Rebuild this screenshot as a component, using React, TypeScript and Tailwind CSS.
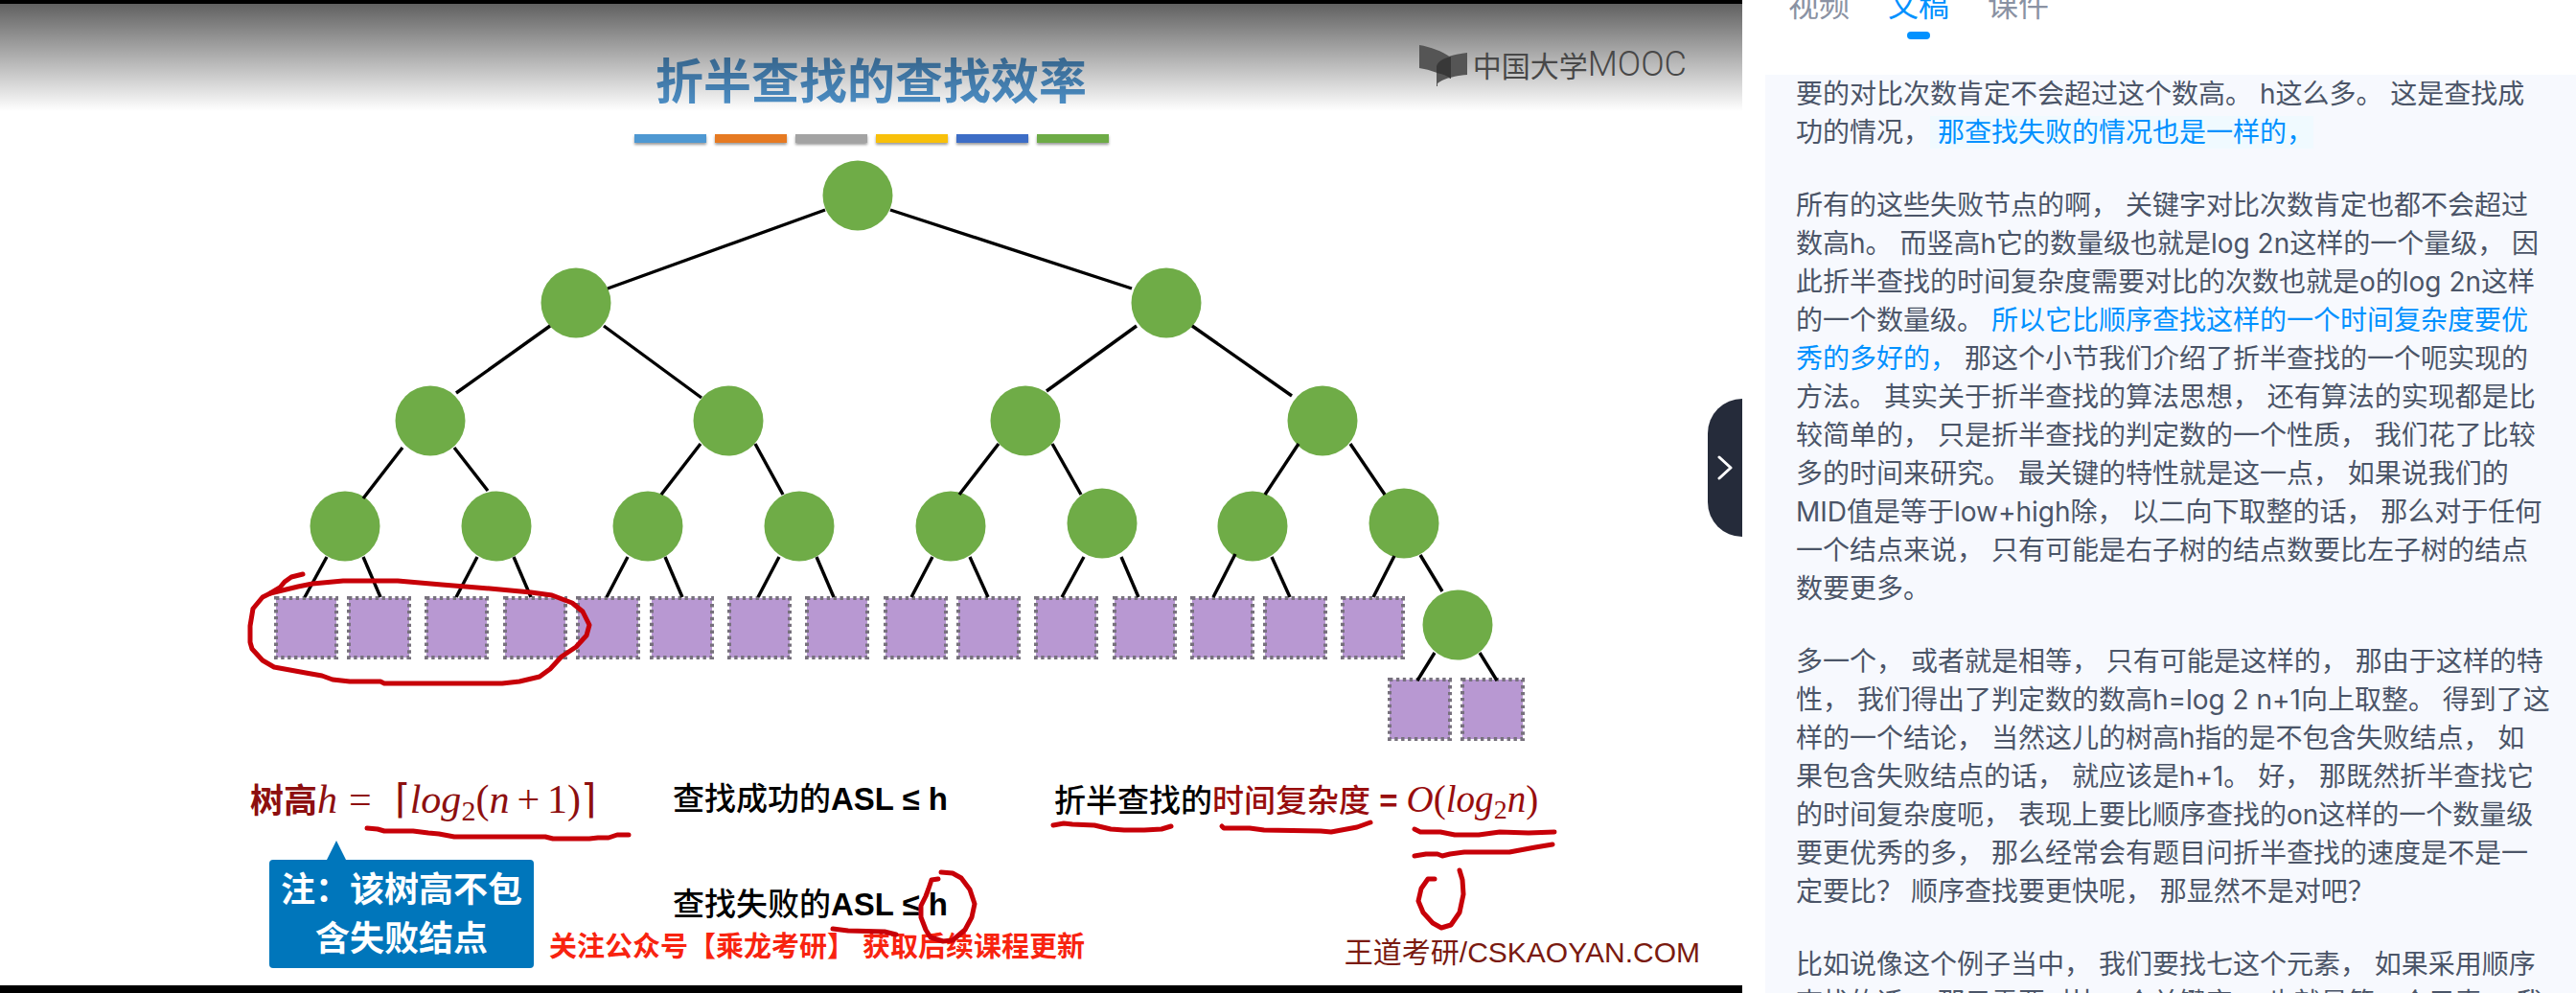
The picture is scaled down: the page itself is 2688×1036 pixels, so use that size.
import React from "react";

type Point = [number, number];
type Edge = [number, number, number, number];

const BARS = ["bg-[#4e98d2]", "bg-[#e67a22]", "bg-[#a3a3a3]", "bg-[#f8c00a]", "bg-[#3d6dc6]", "bg-[#6dab46]"];

const NODES: Point[] = [
  [895, 204],
  [601, 316], [1217, 316],
  [449, 439], [760, 439], [1070, 439], [1380, 439],
  [360, 549], [518, 549], [676, 549], [834, 549], [992, 549], [1150, 546], [1307, 549], [1465, 546],
  [1521, 652],
];

const EDGES: Edge[] = [
  [861, 219, 634, 301], [929, 219, 1181, 301],
  [574, 340, 476, 410], [630, 340, 732, 415],
  [1186, 340, 1092, 408], [1244, 340, 1348, 413],
  [420, 467, 379, 520], [474, 467, 509, 512],
  [731, 463, 690, 516], [788, 463, 817, 516],
  [1042, 463, 1001, 516], [1098, 463, 1128, 516],
  [1355, 463, 1320, 516], [1409, 463, 1445, 516],
  [341, 581, 318, 623], [379, 581, 397, 623],
  [498, 581, 476, 623], [536, 581, 554, 623],
  [655, 581, 633, 623], [694, 581, 712, 623],
  [813, 581, 791, 623], [852, 581, 870, 623],
  [973, 581, 951, 623], [1012, 581, 1031, 623],
  [1131, 581, 1108, 623], [1170, 581, 1188, 623],
  [1289, 578, 1266, 623], [1327, 581, 1346, 623],
  [1455, 580, 1433, 623], [1482, 579, 1505, 617],
  [1497, 681, 1479, 710], [1544, 681, 1562, 710],
];

const LEAVES: Point[] = [
  [288, 624], [364, 624], [445, 624], [527, 624], [603, 624], [680, 624],
  [761, 624], [842, 624], [924, 624], [1000, 624], [1081, 624], [1163, 624],
  [1244, 624], [1320, 624], [1401, 624], [1450, 709], [1526, 709],
];

const INK = [
  "316,599 304,602 297,607 292,613 282,619",
  "282,619 311,612 326,609 358,606 415,606 461,610 511,614 554,618 576,621 597,629 608,638 615,652 612,663 601,675 586,685 574,698 563,706 542,711 524,713 401,713 397,711 365,711 347,709 336,705 319,702 286,696 274,689 263,677 261,670 261,653 264,635 274,623 282,619",
  "383,864 394,865 401,867 431,867 447,869 458,870 474,873 569,873 577,875 615,875 624,874 635,874 644,871 656,871",
  "1099,861 1110,859 1119,860 1142,861 1159,865 1173,866 1194,866 1212,865 1222,862",
  "869,969 885,971 923,972 935,975",
  "979,917 972,918 969,927 966,935 961,945 961,957 966,970 971,978 984,982 994,981 1007,970 1014,957 1017,943 1012,928 1003,916 994,911 982,910",
  "1275,862 1277,864 1304,864 1319,866 1378,867 1389,868 1416,863 1430,858",
  "1476,865 1482,868 1503,868 1518,871 1543,871 1565,868 1595,869 1622,868",
  "1476,893 1488,891 1500,891 1505,893 1513,891 1528,889 1575,889 1602,884 1620,881",
  "1497,917 1490,917 1483,927 1480,940 1485,952 1495,963 1504,968 1514,965 1523,952 1527,933 1526,918 1523,908",
];

type Run = { text: string; tone?: "blue" | "active" };

const TONES = {
  plain: "",
  blue: "text-[#0091ff]",
  active: "bg-[#f0faff] text-[#0091ff]",
};

const TRANSCRIPT: Run[][] = [
  [
    { text: "要的对比次数肯定不会超过这个数高。 h这么多。 这是查找成\n功的情况，" },
    { text: " 那查找失败的情况也是一样的，", tone: "active" },
  ],
  [
    { text: "所有的这些失败节点的啊， 关键字对比次数肯定也都不会超过\n数高h。 而竖高h它的数量级也就是log 2n这样的一个量级， 因\n此折半查找的时间复杂度需要对比的次数也就是o的log 2n这样\n的一个数量级。 " },
    { text: "所以它比顺序查找这样的一个时间复杂度要优\n秀的多好的，", tone: "blue" },
    { text: " 那这个小节我们介绍了折半查找的一个呃实现的\n方法。 其实关于折半查找的算法思想， 还有算法的实现都是比\n较简单的， 只是折半查找的判定数的一个性质， 我们花了比较\n多的时间来研究。 最关键的特性就是这一点， 如果说我们的\nMID值是等于low+high除， 以二向下取整的话， 那么对于任何\n一个结点来说， 只有可能是右子树的结点数要比左子树的结点\n数要更多。" },
  ],
  [
    { text: "多一个， 或者就是相等， 只有可能是这样的， 那由于这样的特\n性， 我们得出了判定数的数高h=log 2 n+1向上取整。 得到了这\n样的一个结论， 当然这儿的树高h指的是不包含失败结点， 如\n果包含失败结点的话， 就应该是h+1。 好， 那既然折半查找它\n的时间复杂度呃， 表现上要比顺序查找的on这样的一个数量级\n要更优秀的多， 那么经常会有题目问折半查找的速度是不是一\n定要比？ 顺序查找要更快呢， 那显然不是对吧？" },
  ],
  [
    { text: "比如说像这个例子当中， 我们要找七这个元素， 如果采用顺序\n查找的话， 那只需要对比一个关键字， 也就是第一个元素。 我" },
  ],
];

const TABS = ["视频", "文稿", "课件"];

function TreeDiagram() {
  return (
    <svg viewBox="0 160 1818 630" className="block w-full" role="img" aria-label="折半查找判定树">
      {LEAVES.map(([x, y]) => (
        <rect key={`${x}-${y}`} x={x} y={y} width={63} height={62} fill="#b898d2" stroke="#77717d" strokeWidth={4} strokeDasharray="3.4 3.5" />
      ))}
      {NODES.map(([x, y]) => (
        <circle key={`${x}-${y}`} cx={x} cy={y} r={36.5} fill="#6fac47" />
      ))}
      {EDGES.map(([a, b, c, d]) => (
        <line key={`${a}-${b}-${c}`} x1={a} y1={b} x2={c} y2={d} stroke="#000" strokeWidth={3.4} />
      ))}
    </svg>
  );
}

function InkLayer() {
  return (
    <svg viewBox="0 4 1818 1024" className="pointer-events-none absolute inset-x-0 top-0 w-full" aria-hidden="true">
      {INK.map((points) => (
        <polyline key={points} points={points} fill="none" stroke="#c70008" strokeWidth={5} strokeLinecap="round" strokeLinejoin="round" />
      ))}
    </svg>
  );
}

function MoocLogo() {
  return (
    <div className="absolute top-10 right-[58px] flex items-center gap-[5px] text-[#484848]">
      <svg viewBox="0 0 52 46" className="h-[46px] w-[52px]" aria-hidden="true">
        <path d="M1 3C13 5 24 9 34 16V38C24 33 13 29 1 27Z" fill="#555" />
        <path d="M19 25C22 16 36 13 51 11V34C38 35 26 38 20 43V46H19Z" fill="#555" />
        <path d="M19 25C21 19 27 17 34 15V38C30 35 25 33 19 32Z" fill="#383838" />
      </svg>
      <span className="flex items-center leading-10">
        <span className="font-['Noto_Sans_CJK_SC',sans-serif] text-[30px]">中国大学</span>
        <span className="font-[Roboto,sans-serif] text-[36px] font-light">MOOC</span>
      </span>
    </div>
  );
}

function Slide() {
  return (
    <section className="relative min-w-0 flex-1 overflow-hidden border-t-4 border-b-8 border-black bg-white">
      <header className="flex h-[156px] flex-col items-center pt-[50px]">
        <h1 className="text-[50px] leading-[64px] font-bold text-[#4f93cc]">折半查找的查找效率</h1>
        <div className="mt-[22px] flex gap-[9px]">
          {BARS.map((c) => (
            <span key={c} className={`${c} h-[9px] w-[75px] shadow-[0_2px_3px_rgba(0,0,0,0.4)]`} />
          ))}
        </div>
      </header>

      <TreeDiagram />

      <div className="grid grid-cols-[261fr_441fr_398fr_718fr] pt-5 whitespace-nowrap">
        <div className="col-start-2">
          <p className="flex h-12 items-baseline text-[42px] leading-[48px] text-[#8d0f0f]">
            <span className="text-[35px] font-bold">树高</span>
            <span className="font-['Liberation_Serif',serif]">
              <i>h</i>
              <span className="mx-3">=</span>
              <span className="ml-3">⌈</span>
              <i>log</i>
              <sub className="text-[30px] leading-none">2</sub>(<i>n</i>
              <span className="mx-2">+</span>1)⌉
            </span>
          </p>
          <div className="relative mt-[39px] ml-5 w-[276px] rounded bg-[#0076bb] pt-[6px] pb-[5px] text-center text-[36px] leading-[51px] font-bold text-white">
            <svg viewBox="0 0 20 20" className="absolute -top-5 left-[60px] size-5" aria-hidden="true">
              <path d="M10 0L20 20H0Z" fill="#0076bb" />
            </svg>
            注：该树高不包
            <br />
            含失败结点
          </div>
        </div>
        <div className="text-[33px] leading-[48px] font-medium text-black">
          <p>
            查找成功的<b>ASL ≤ h</b>
          </p>
          <p className="mt-[62px]">
            查找失败的<b>ASL ≤ h</b>
          </p>
        </div>
        <div className="flex flex-col justify-between">
          <p className="h-12 text-[33px] leading-[48px] font-medium text-black">
            折半查找的
            <span className="text-[#980d0d]">
              时间复杂度<b> = </b>
              <span className="font-['Liberation_Serif',serif] text-[39px] font-normal">
                <i>O</i>(<i>log</i>
                <sub className="text-[28px] leading-none">2</sub>
                <i>n</i>)
              </span>
            </span>
          </p>
          <p className="pr-[44px] text-right text-[30px] leading-8 text-[#7a1a10]">王道考研/CSKAOYAN.COM</p>
        </div>
      </div>

      <div className="pointer-events-none absolute inset-x-0 top-0 h-[112px] bg-linear-to-b from-black/62 to-transparent" />
      <MoocLogo />
      <p className="absolute bottom-5 left-[573px] text-[29px] leading-10 font-bold whitespace-nowrap text-[#f8230f]">
        关注公众号【乘龙考研】 获取后续课程更新
      </p>
      <InkLayer />
      <button
        type="button"
        aria-label="收起侧栏"
        className="absolute top-[412px] right-0 flex h-36 w-9 items-center justify-center rounded-l-[36px] bg-[#252b3a] text-white"
      >
        <svg viewBox="0 0 16 26" className="h-[26px] w-4" fill="none" stroke="currentColor" strokeWidth={3} strokeLinecap="round" strokeLinejoin="round" aria-hidden="true">
          <path d="M2 2L14 13L2 24" />
        </svg>
      </button>
    </section>
  );
}

function TranscriptPanel() {
  return (
    <aside className="w-[870px] shrink-0 bg-white pl-6">
      <div role="tablist" className="-mt-[14px] flex h-[92px] items-start gap-10 pl-6 text-[32px] leading-10">
        {TABS.map((tab) => {
          const active = tab === "文稿";
          return (
            <button
              key={tab}
              type="button"
              role="tab"
              aria-selected={active}
              className={`flex flex-col items-center ${active ? "text-[#0091ff]" : "text-[#8a92a3]"}`}
            >
              {tab}
              {active && <span className="mt-[7px] h-2 w-6 rounded bg-[#0091ff]" />}
            </button>
          );
        })}
      </div>
      <div className="flex flex-col gap-9 bg-[#f7f9fe] pl-8 font-[Inter,'Noto_Sans_CJK_SC',sans-serif] text-[28px] leading-10 whitespace-pre text-[#4b5568]">
        {TRANSCRIPT.map((runs, i) => (
          <p key={i}>
            {runs.map((run) => (
              <span key={run.text} className={TONES[run.tone ?? "plain"]}>
                {run.text}
              </span>
            ))}
          </p>
        ))}
      </div>
    </aside>
  );
}

export default function App() {
  return (
    <main lang="zh-CN" className="flex h-screen overflow-hidden bg-white font-['Liberation_Sans','Noto_Sans_CJK_SC',sans-serif]">
      <Slide />
      <TranscriptPanel />
    </main>
  );
}
